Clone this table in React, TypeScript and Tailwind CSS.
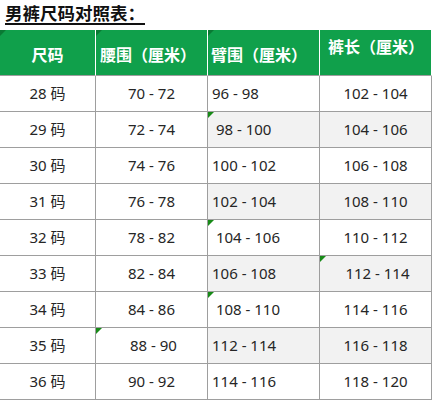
import React from "react";

type Cell = { t: string; tri?: boolean };

const rows: Cell[][] = [
  [{ t: "28 码" }, { t: "70 - 72" }, { t: "96 - 98" }, { t: "102 - 104" }],
  [{ t: "29 码" }, { t: "72 - 74" }, { t: " 98 - 100", tri: true }, { t: "104 - 106" }],
  [{ t: "30 码" }, { t: "74 - 76" }, { t: "100 - 102" }, { t: "106 - 108" }],
  [{ t: "31 码" }, { t: "76 - 78" }, { t: "102 - 104" }, { t: "108 - 110" }],
  [{ t: "32 码" }, { t: "78 - 82" }, { t: " 104 - 106", tri: true }, { t: "110 - 112" }],
  [{ t: "33 码" }, { t: "82 - 84" }, { t: "106 - 108" }, { t: " 112 - 114", tri: true }],
  [{ t: "34 码" }, { t: "84 - 86" }, { t: " 108 - 110", tri: true }, { t: "114 - 116" }],
  [{ t: "35 码" }, { t: " 88 - 90", tri: true }, { t: "112 - 114" }, { t: "116 - 118" }],
  [{ t: "36 码" }, { t: "90 - 92" }, { t: "114 - 116" }, { t: "118 - 120" }],
];

const Tri = ({ dark }: { dark?: boolean }) => (
  <span
    className={
      dark
        ? "absolute left-0 top-0 w-0 h-0 border-t-[6px] border-r-[6px] border-r-transparent border-t-[#0a7a34]"
        : "absolute left-0 top-0 w-0 h-0 border-t-[6px] border-r-[6px] border-r-transparent border-t-[#178a17]"
    }
  />
);

const headBase =
  "relative h-[46px] bg-[#10a04b] border-r border-r-white border-b border-b-[#9e9e9e] flex text-white font-bold text-[16px] font-['Noto_Sans_CJK_SC',sans-serif]";

export default function App() {
  return (
    <div className="w-[432px] h-[402px] bg-white overflow-hidden font-['Noto_Sans','Noto_Sans_CJK_SC',sans-serif]">
      <div className="h-[30px] pl-[5px] pt-[2px]">
        <span className="text-[17.5px] leading-[22px] font-bold text-[#111] underline underline-offset-[3px] decoration-[1.5px] font-['Noto_Sans_CJK_SC',sans-serif]">
          男裤尺码对照表：
        </span>
      </div>
      <div className="grid grid-cols-[96px_112px_112px_112px]">
        <div className={headBase + " items-center justify-center pt-[3px]"}>
          <Tri dark />
          <span>尺码</span>
        </div>
        <div className={headBase + " items-center pl-[4px] pt-[3px]"}>
          <Tri dark />
          <span>腰围（厘米）</span>
        </div>
        <div className={headBase + " items-center pl-[3px] pt-[3px]"}>
          <Tri dark />
          <span>臂围（厘米）</span>
        </div>
        <div className={headBase + " items-start pl-[8px] pt-[4px]"}>
          <span>裤长（厘米）</span>
        </div>
        {rows.map((r, i) =>
          r.map((c, j) => {
            const shaded = i % 2 === 1 && j >= 2;
            const left = j === 2;
            return (
              <div
                key={i + "-" + j}
                className={
                  "relative h-[36px] border-r border-b border-[#9e9e9e] flex items-center text-[15px] text-[#262626] whitespace-pre " +
                  (shaded ? "bg-[#f2f2f2] " : "bg-white ") +
                  (left ? "justify-start pl-[4px]" : "justify-center")
                }
              >
                {c.tri && <Tri />}
                <span>{c.t}</span>
              </div>
            );
          })
        )}
      </div>
    </div>
  );
}
